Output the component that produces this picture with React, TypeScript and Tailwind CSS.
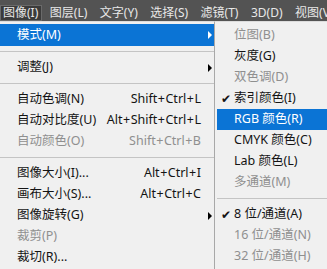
import React from "react";

type Item =
  | { sep: true }
  | { sep?: false; label: string; shortcut?: string; arrow?: boolean; disabled?: boolean; active?: boolean; check?: boolean; h?: number };

const mainItems: Item[] = [
  { label: "模式(M)", arrow: true, active: true, h: 22 },
  { sep: true },
  { label: "调整(J)", arrow: true },
  { sep: true },
  { label: "自动色调(N)", shortcut: "Shift+Ctrl+L" },
  { label: "自动对比度(U)", shortcut: "Alt+Shift+Ctrl+L" },
  { label: "自动颜色(O)", shortcut: "Shift+Ctrl+B", disabled: true },
  { sep: true },
  { label: "图像大小(I)...", shortcut: "Alt+Ctrl+I" },
  { label: "画布大小(S)...", shortcut: "Alt+Ctrl+C" },
  { label: "图像旋转(G)", arrow: true },
  { label: "裁剪(P)", disabled: true },
  { label: "裁切(R)..." },
];

const subItems: Item[] = [
  { label: "位图(B)", disabled: true },
  { label: "灰度(G)" },
  { label: "双色调(D)", disabled: true },
  { label: "索引颜色(I)", check: true },
  { label: "RGB 颜色(R)", active: true },
  { label: "CMYK 颜色(C)" },
  { label: "Lab 颜色(L)" },
  { label: "多通道(M)", disabled: true },
  { sep: true },
  { label: "8 位/通道(A)", check: true },
  { label: "16 位/通道(N)", disabled: true },
  { label: "32 位/通道(H)", disabled: true },
];

const bar = ["图像(I)", "图层(L)", "文字(Y)", "选择(S)", "滤镜(T)", "3D(D)", "视图(V)"];

function Arrow({ white }: { white?: boolean }) {
  return (
    <span
      className={
        "block w-0 h-0 border-y-[4px] border-y-transparent border-l-[4px] " +
        (white ? "border-l-white" : "border-l-black")
      }
    />
  );
}

function Shortcut({ text }: { text: string }) {
  const parts = text.split("+");
  return (
    <span className="flex">
      {parts.map((p, i) => (
        <React.Fragment key={i}>
          {i > 0 && <span className="px-[0.5px]">+</span>}
          <span>{p}</span>
        </React.Fragment>
      ))}
    </span>
  );
}

export default function App() {
  return (
    <div className="w-[327px] h-[269px] overflow-hidden flex flex-col bg-[#f0f0f0] font-['Noto_Sans','Noto_Sans_CJK_SC',sans-serif] text-[12.5px] leading-none">
      <div className="h-[21px] shrink-0 bg-[#535353] flex items-end text-[#e8e8e8] whitespace-nowrap text-[12px]">
        <div className="flex gap-[12.5px] items-center h-[17px]">
          {bar.map((b, i) => (
            <div
              key={b}
              className={
                "h-[16px] flex items-center " +
                (i === 0 ? "bg-[#3b3b3b] border border-[#6a6a6a] pl-[2px] pr-[3px] -mr-[5px]" : "")
              }
            >
              {b}
            </div>
          ))}
        </div>
      </div>
      <div className="flex flex-1 min-h-0">
        <div className="w-[214px] shrink-0 pt-[2px] border-t border-[#dcdcdc]">
          {mainItems.map((it, i) =>
            it.sep ? (
              <div key={i} className="h-[11px] flex items-center">
                <div className="h-px w-full bg-[#c4c4c4]" />
              </div>
            ) : (
              <div
                key={i}
                className={
                  "flex items-center pl-[17px] whitespace-nowrap " +
                  (it.h === 22 ? "h-[22px] " : "h-[21px] ") +
                  (it.active ? "bg-[#0b74d5] text-white " : it.disabled ? "text-[#8f8f8f] " : "text-[#141414] ")
                }
              >
                <span className="flex-1">{it.label}</span>
                {it.shortcut && <Shortcut text={it.shortcut} />}
                <span className="w-[13px] flex justify-start pl-[7px]">{it.arrow && <Arrow white={it.active} />}</span>
              </div>
            )
          )}
        </div>
        <div className="flex-1 border-l border-[#a8a8a8] pt-[3px] pl-[2px] border-t border-t-[#dcdcdc]">
          {subItems.map((it, i) =>
            it.sep ? (
              <div key={i} className="h-[11px] flex items-center">
                <div className="h-px w-full bg-[#c4c4c4]" />
              </div>
            ) : (
              <div
                key={i}
                className={
                  "h-[21px] flex items-center whitespace-nowrap " +
                  (it.active ? "bg-[#0b74d5] text-white " : it.disabled ? "text-[#8f8f8f] " : "text-[#141414] ")
                }
              >
                <span className="w-[17px] flex justify-center text-[12px]">{it.check ? "✔" : ""}</span>
                <span>{it.label}</span>
              </div>
            )
          )}
        </div>
      </div>
    </div>
  );
}
